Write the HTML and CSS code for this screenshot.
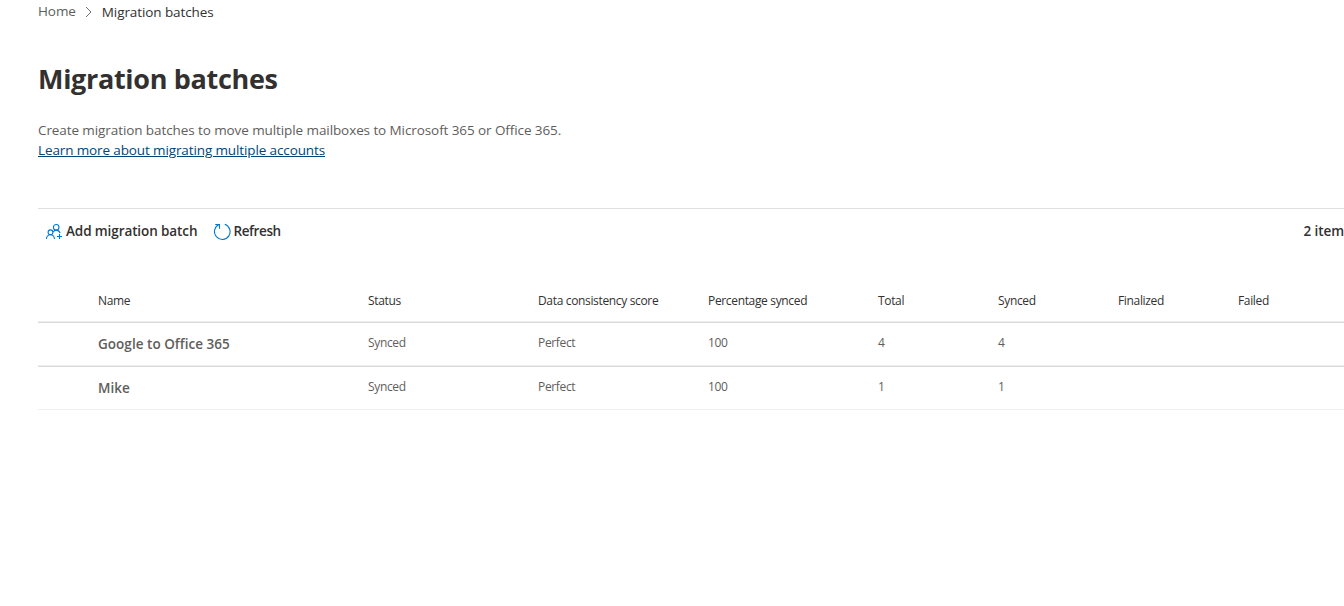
FILE: index.html
```html
<!doctype html>
<html lang="en">
<head>
<title>Migration batches</title>
<meta charset="utf-8" />
<link rel="stylesheet" href="styles.css">
</head>

<body>
<div class="page">
	<nav class="breadcrumb">
		<a class="home">Home</a>
		<svg class="chevron" width="8" height="12" viewBox="0 0 8 12"><path d="M1 1l5 5-5 5" /></svg>
		<span class="current">Migration batches</span>
	</nav>

	<h1>Migration batches</h1>

	<div class="intro">
		<p>Create migration batches to move multiple mailboxes to Microsoft 365 or Office 365.</p>
		<a href="#">Learn more about migrating multiple accounts</a>
	</div>

	<div class="toolbar">
		<button class="add">
			<svg width="18" height="18" viewBox="0 0 18 18">
				<circle cx="5.5" cy="9.3" r="2.4" />
				<path d="M1.5 16c0-2.5 1.8-4.3 4-4.3s3.9 1.8 3.9 4.3" />
				<circle cx="11.2" cy="4.3" r="2.8" />
				<path d="M8.200 9c.7-1.200 1.700-1.900 3-1.900 1.900 0 3.200 1.200 3.900 2.900" />
				<path d="M14.500 11v5M12 13.500h5" />
			</svg>
			<span>Add migration batch</span>
		</button>
		<button class="refresh">
			<svg width="18" height="18" viewBox="0 0 18 18">
				<path d="M11.800 1.300A7.800 7.800 0 1 1 6 1.600" />
				<path d="M2.200 1.500H6.500v4.300" />
			</svg>
			<span>Refresh</span>
		</button>
		<span class="count">2 item</span>
	</div>

	<div class="table">
		<div class="row head">
			<span>Name</span>
			<span>Status</span>
			<span>Data consistency score</span>
			<span>Percentage synced</span>
			<span>Total</span>
			<span>Synced</span>
			<span>Finalized</span>
			<span>Failed</span>
		</div>
		<div class="row">
			<strong>Google to Office 365</strong>
			<span>Synced</span>
			<span>Perfect</span>
			<span>100</span>
			<span>4</span>
			<span>4</span>
		</div>
		<div class="row">
			<strong>Mike</strong>
			<span>Synced</span>
			<span>Perfect</span>
			<span>100</span>
			<span>1</span>
			<span>1</span>
		</div>
	</div>
</div>
</body>
</html>
```
FILE: styles.css
```css
* { box-sizing: border-box; }
body { margin: 0; background: #fff; color: #323130; font: 13.5px/20px "Open Sans", "Noto Sans", sans-serif; letter-spacing: -0.09px; overflow: hidden; }
h1, p { margin: 0; }
svg { flex: none; fill: none; stroke: #0078d4; stroke-width: 1.1; }
.page { padding-left: 38px; white-space: nowrap; }

.breadcrumb { display: flex; align-items: center; height: 24px; }
.home { margin-bottom: 2px; color: #605e5c; }
.chevron { margin: 0 9px; stroke: #605e5c; stroke-width: 0.9; }

h1 { margin-top: 37px; font-size: 27px; line-height: 36px; font-weight: 700; letter-spacing: -0.32px; }

.intro { margin-top: 23px; height: 88px; color: #605e5c; }
.intro a { color: #004578; letter-spacing: -0.12px; }

.toolbar { display: flex; align-items: center; height: 46px; border-top: 1px solid #e1dfdd; font-weight: 600; }
.toolbar span { margin-bottom: 1px; }
button { display: flex; align-items: center; gap: 3px; padding: 0; border: 0; background: none; color: inherit; font: inherit; }
.add { margin-left: 7px; letter-spacing: -0.1px; }
.refresh { gap: 2px; margin-left: 16px; letter-spacing: -0.38px; }
.count { margin-left: auto; }

.table { margin-top: 26px; font-size: 12px; letter-spacing: -0.34px; }
.row { display: grid; grid-template-columns: 270px 170px 170px 170px repeat(4, 120px); height: 44px; padding: 10px 0 0 60px; border-bottom: 1px solid #dadada; box-shadow: inset 0 -1px #ededed; color: #605e5c; }
.row:last-child { height: 43px; border-bottom: 1px solid #f0f0f0; box-shadow: none; }
.head { height: 43px; padding-top: 11px; color: #323130; }
.row strong { font-size: 13.5px; font-weight: 600; letter-spacing: 0.03px; padding-top: 1px; }
```
